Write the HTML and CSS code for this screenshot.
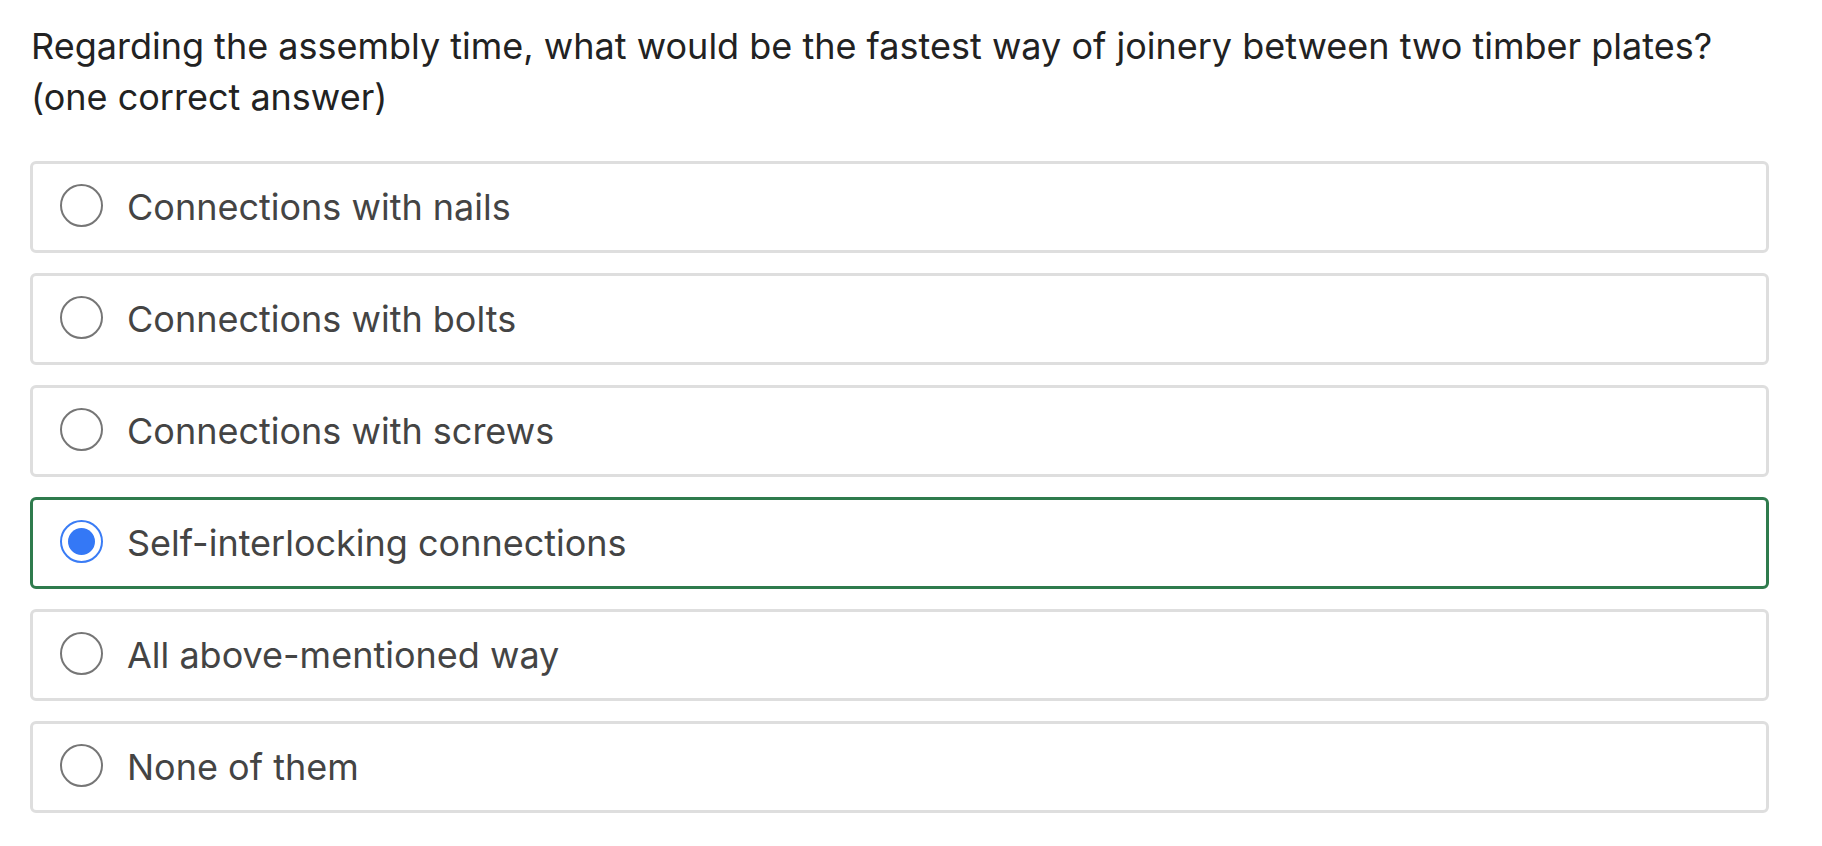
FILE: index.html
```html
<!DOCTYPE html>
<html lang="en">
<head>
<meta charset="utf-8">
<title>Question</title>
<link rel="stylesheet" href="styles.css">
</head>
<body>
<main class="quiz">
  <p class="question">Regarding the assembly time, what would be the fastest way of joinery between two timber plates?<br>(one correct answer)</p>
  <ul class="options">
    <li class="option"><span class="radio"></span><span class="label">Connections with nails</span></li>
    <li class="option"><span class="radio"></span><span class="label">Connections with bolts</span></li>
    <li class="option"><span class="radio"></span><span class="label">Connections with screws</span></li>
    <li class="option selected"><span class="radio"></span><span class="label">Self-interlocking connections</span></li>
    <li class="option"><span class="radio"></span><span class="label">All above-mentioned way</span></li>
    <li class="option"><span class="radio"></span><span class="label">None of them</span></li>
  </ul>
</main>
</body>
</html>
```

FILE: styles.css
```css
html, body {
  margin: 0;
  padding: 0;
  background: #ffffff;
}

body {
  font-family: Inter, "Noto Sans", "Liberation Sans", sans-serif;
}

.quiz {
  width: 1739px;
  padding: 21px 0 0 30px;
}

.question {
  margin: 0 0 38px 0;
  font-size: 36px;
  line-height: 51px;
  color: #222222;
  padding-left: 1px;
}

.options {
  list-style: none;
  margin: 0;
  padding: 0;
  display: flex;
  flex-direction: column;
  gap: 20px;
}

.option {
  box-sizing: border-box;
  height: 92px;
  border: 3px solid #dedede;
  border-radius: 6px;
  display: flex;
  align-items: center;
  padding-left: 27px;
  gap: 24px;
}

.option.selected {
  border-color: #2f7b4d;
}

.radio {
  box-sizing: border-box;
  flex: none;
  width: 43px;
  height: 43px;
  border-radius: 50%;
  border: 2px solid #767676;
  display: flex;
  align-items: center;
  justify-content: center;
  margin-top: -3px;
}

.selected .radio {
  border-color: #3a7cf5;
}

.selected .radio::after {
  content: "";
  width: 27px;
  height: 27px;
  border-radius: 50%;
  background: #3478f6;
}

.label {
  font-size: 36px;
  color: #444444;
  line-height: 44px;
}
```
